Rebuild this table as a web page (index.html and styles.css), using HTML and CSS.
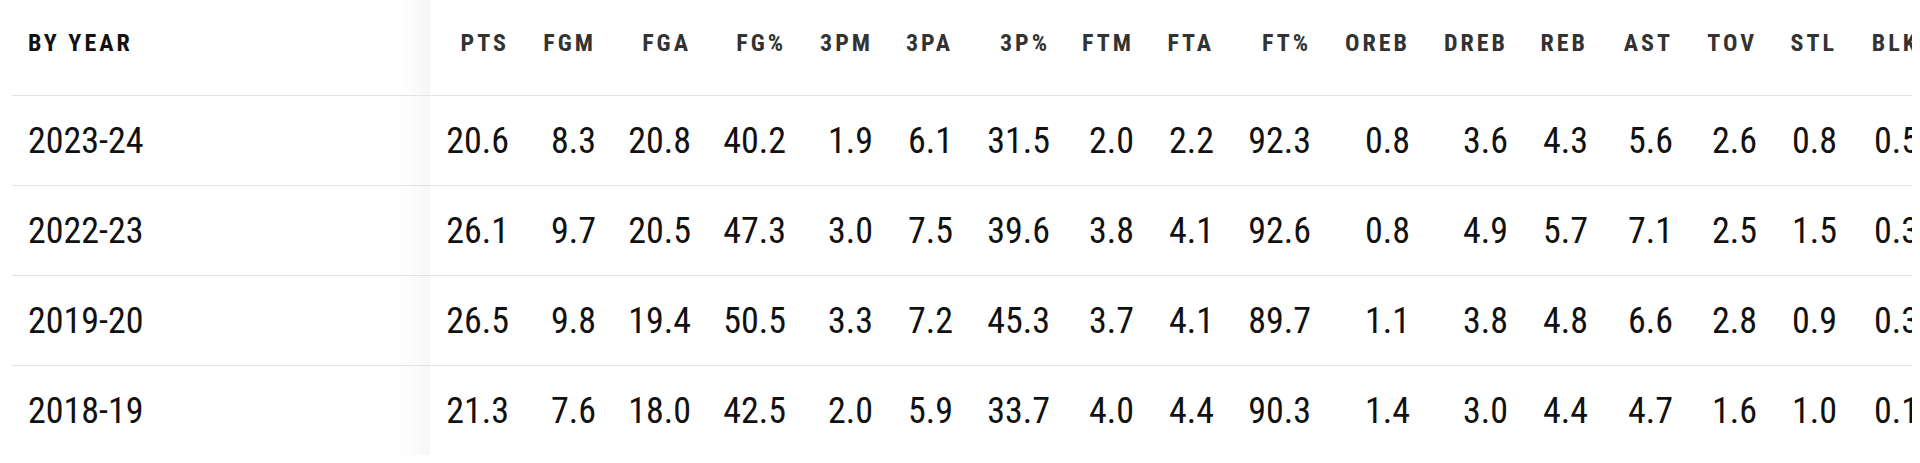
FILE: index.html
```html
<!DOCTYPE html>
<html lang="en">
<head>
<meta charset="utf-8">
<title>By Year</title>
<link rel="stylesheet" href="styles.css">
</head>
<body>
<div class="stats-wrap">
  <table class="stats">
    <colgroup>
      <col class="c-year">
      <col class="c-95"><col class="c-87"><col class="c-95"><col class="c-95"><col class="c-87"><col class="c-80">
      <col class="c-97"><col class="c-84"><col class="c-80"><col class="c-97"><col class="c-99"><col class="c-98">
      <col class="c-80"><col class="c-85"><col class="c-84"><col class="c-80"><col class="c-82">
    </colgroup>
    <thead>
      <tr>
        <th class="year">BY YEAR</th>
        <th>PTS</th><th>FGM</th><th>FGA</th><th>FG%</th><th>3PM</th><th>3PA</th><th>3P%</th><th>FTM</th><th>FTA</th><th>FT%</th><th>OREB</th><th>DREB</th><th>REB</th><th>AST</th><th>TOV</th><th>STL</th><th>BLK</th>
      </tr>
    </thead>
    <tbody>
      <tr>
        <td class="year">2023-24</td>
        <td>20.6</td><td>8.3</td><td>20.8</td><td>40.2</td><td>1.9</td><td>6.1</td><td>31.5</td><td>2.0</td><td>2.2</td><td>92.3</td><td>0.8</td><td>3.6</td><td>4.3</td><td>5.6</td><td>2.6</td><td>0.8</td><td>0.5</td>
      </tr>
      <tr>
        <td class="year">2022-23</td>
        <td>26.1</td><td>9.7</td><td>20.5</td><td>47.3</td><td>3.0</td><td>7.5</td><td>39.6</td><td>3.8</td><td>4.1</td><td>92.6</td><td>0.8</td><td>4.9</td><td>5.7</td><td>7.1</td><td>2.5</td><td>1.5</td><td>0.3</td>
      </tr>
      <tr>
        <td class="year">2019-20</td>
        <td>26.5</td><td>9.8</td><td>19.4</td><td>50.5</td><td>3.3</td><td>7.2</td><td>45.3</td><td>3.7</td><td>4.1</td><td>89.7</td><td>1.1</td><td>3.8</td><td>4.8</td><td>6.6</td><td>2.8</td><td>0.9</td><td>0.3</td>
      </tr>
      <tr>
        <td class="year">2018-19</td>
        <td>21.3</td><td>7.6</td><td>18.0</td><td>42.5</td><td>2.0</td><td>5.9</td><td>33.7</td><td>4.0</td><td>4.4</td><td>90.3</td><td>1.4</td><td>3.0</td><td>4.4</td><td>4.7</td><td>1.6</td><td>1.0</td><td>0.1</td>
      </tr>
    </tbody>
  </table>
</div>
</body>
</html>
```

FILE: styles.css
```css
html, body {
  margin: 0;
  padding: 0;
  background: #fff;
}

body {
  font-family: "Roboto Condensed", "Liberation Sans Narrow", "Roboto", sans-serif;
  font-stretch: condensed;
  color: #111;
}

.stats-wrap {
  margin: 0 8px 0 12px;
  overflow: hidden;
}

.stats {
  border-collapse: collapse;
  table-layout: fixed;
  width: 1923px;
}

.c-year { width: 418px; }
.c-80 { width: 80px; }
.c-82 { width: 82px; }
.c-84 { width: 84px; }
.c-85 { width: 85px; }
.c-87 { width: 87px; }
.c-95 { width: 95px; }
.c-97 { width: 97px; }
.c-98 { width: 98px; }
.c-99 { width: 99px; }

.stats th,
.stats td {
  padding: 0 16px 0 0;
  text-align: right;
  vertical-align: middle;
  white-space: nowrap;
  overflow: hidden;
}

.stats thead th {
  height: 85px;
  padding-bottom: 10px;
  font-size: 24px;
  font-weight: 700;
  letter-spacing: 3px;
  line-height: 1;
  color: #333;
  border-bottom: 1px solid #e4e4e4;
}

.stats tbody td {
  height: 89px;
  font-size: 36px;
  font-weight: 400;
  line-height: 1;
  color: #111;
  border-bottom: 1px solid #e4e4e4;
}

.stats tbody tr:last-child td {
  border-bottom: 0;
}

.stats .year {
  text-align: left;
  padding-left: 16px;
  padding-right: 0;
  color: #111;
  background: linear-gradient(to right, #fff calc(100% - 30px), #f6f6f6);
  box-shadow: 3px 0 5px -3px rgba(0, 0, 0, 0.07);
  position: relative;
}
```
